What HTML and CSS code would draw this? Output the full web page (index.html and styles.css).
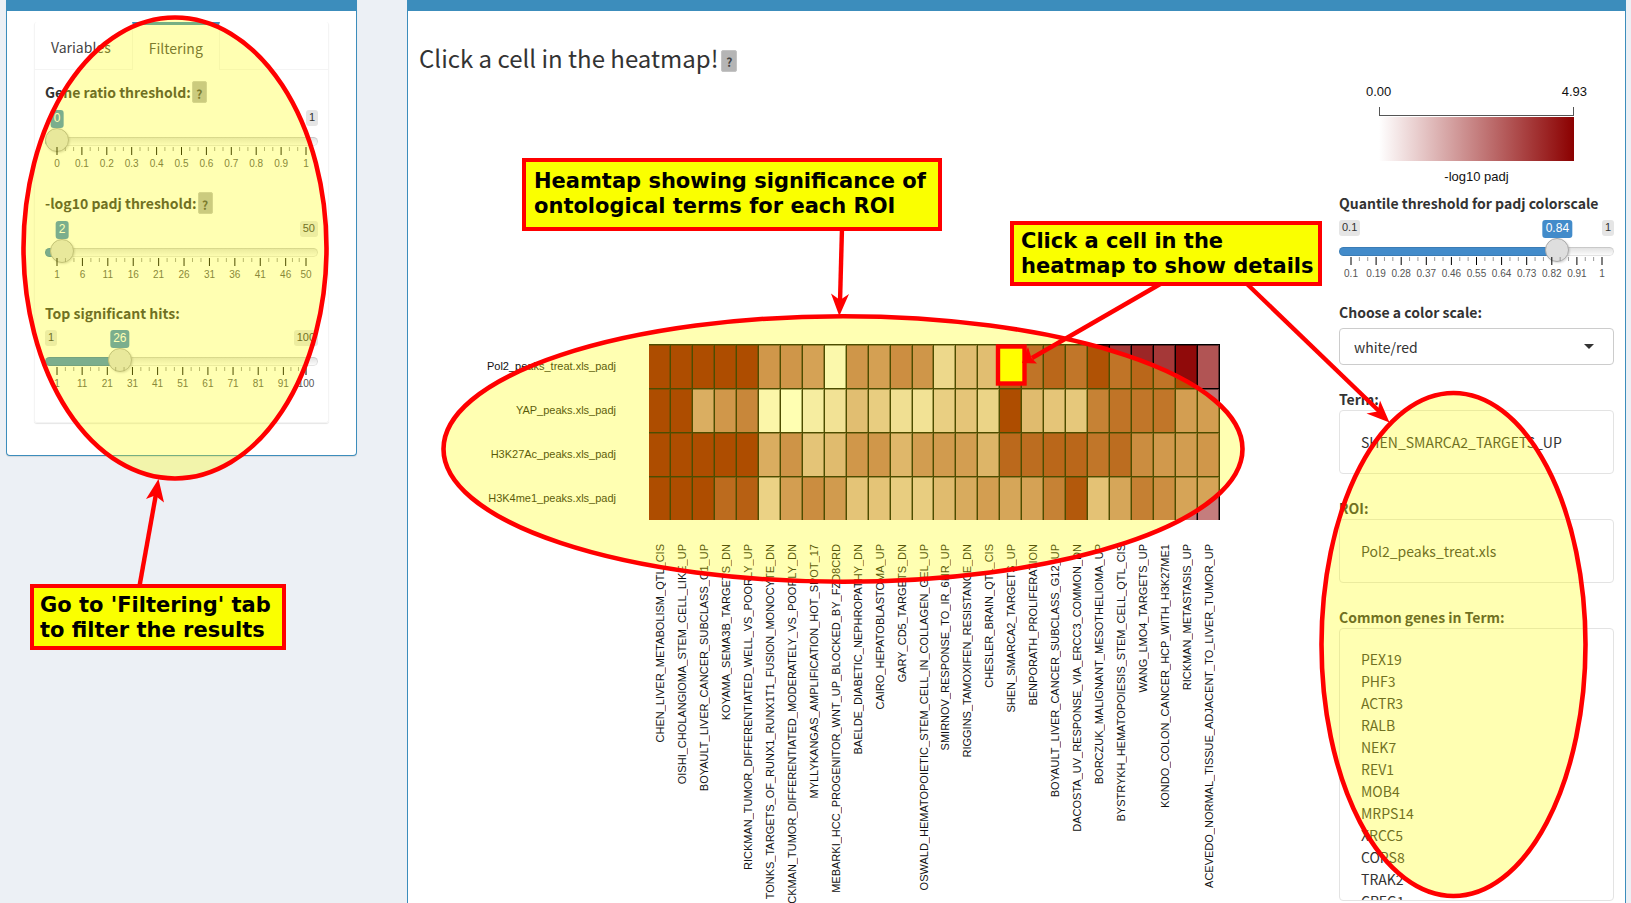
FILE: index.html
```html
<!DOCTYPE html>
<html lang="en">
<head>
<meta charset="utf-8">
<title>Ontology enrichment heatmap</title>
<link rel="stylesheet" href="styles.css">
</head>
<body>
<main class="page">
  <section class="box filter-box">
    <div class="tab-panel">
      <div class="tabs" role="tablist">
        <button class="tab" type="button" role="tab" aria-selected="false">Variables</button>
        <button class="tab active" type="button" role="tab" aria-selected="true">Filtering</button>
      </div>
      <div class="tab-body">
        <div class="field">
          <div class="label-row"><label for="ratio">Gene ratio threshold:</label><button class="help" type="button">?</button></div>
          <div class="slider" data-min="0" data-max="1" data-value="0" data-step="0.01" data-id="ratio" data-ticks="0,0.1,0.2,0.3,0.4,0.5,0.6,0.7,0.8,0.9,1"></div>
        </div>
        <div class="field">
          <div class="label-row"><label for="padj">-log10 padj threshold:</label><button class="help" type="button">?</button></div>
          <div class="slider" data-min="1" data-max="50" data-value="2" data-step="1" data-id="padj" data-ticks="1,6,11,16,21,26,31,36,41,46,50"></div>
        </div>
        <div class="field">
          <div class="label-row"><label for="hits">Top significant hits:</label></div>
          <div class="slider" data-min="1" data-max="100" data-value="26" data-step="1" data-id="hits" data-ticks="1,11,21,31,41,51,61,71,81,91,100"></div>
        </div>
      </div>
    </div>
  </section>

  <section class="box result-box">
    <div class="plot">
      <h1 class="title">Click a cell in the heatmap!<button class="help" type="button">?</button></h1>
      <div class="heatmap">
        <div class="row-labels" id="rows"></div>
        <div class="cells" id="cells"></div>
        <div class="col-labels" id="cols"></div>
      </div>
    </div>

    <aside class="side">
      <div class="legend">
        <div class="legend-ends"><span>0.00</span><span>4.93</span></div>
        <div class="legend-bracket"></div>
        <div class="legend-ramp"></div>
        <div class="legend-name">-log10 padj</div>
      </div>
      <div class="field">
        <div class="label-row"><label for="quantile">Quantile threshold for padj colorscale</label></div>
        <div class="slider" data-min="0.1" data-max="1" data-value="0.84" data-step="0.01" data-id="quantile" data-ticks="0.1,0.19,0.28,0.37,0.46,0.55,0.64,0.73,0.82,0.91,1"></div>
      </div>
      <div class="group">
        <label class="group-label" for="scale">Choose a color scale:</label>
        <div class="select-wrap"><select id="scale"><option>white/red</option></select></div>
      </div>
      <div class="group">
        <strong class="group-label">Term:</strong>
        <div class="well">SHEN_SMARCA2_TARGETS_UP</div>
      </div>
      <div class="group">
        <strong class="group-label">ROI:</strong>
        <div class="well">Pol2_peaks_treat.xls</div>
      </div>
      <div class="group">
        <strong class="group-label">Common genes in Term:</strong>
        <div class="well genes">PEX19<br>PHF3<br>ACTR3<br>RALB<br>NEK7<br>REV1<br>MOB4<br>MRPS14<br>XRCC5<br>COPS8<br>TRAK2<br>CREG1</div>
      </div>
    </aside>
  </section>
</main>

<svg class="marks" width="1631" height="903" viewBox="0 0 1631 903" aria-hidden="true">
  <g fill="#ffff00" fill-opacity="0.3" stroke="#ff0000" stroke-width="4.6">
    <ellipse cx="175" cy="248" rx="151.5" ry="230.5"/>
    <ellipse cx="843" cy="449" rx="399.5" ry="132.8"/>
    <ellipse cx="1453.5" cy="644.5" rx="132" ry="251.5"/>
  </g>
  <rect x="998" y="346.5" width="26.5" height="37" fill="#ffff00" stroke="#ff0000" stroke-width="4.4"/>
  <g stroke="#ff0000" stroke-width="4.4">
    <path d="M139.500 586 156 494"/>
    <path d="M842 228 840 302"/>
    <path d="M1162 283 1032 358"/>
    <path d="M1246 283 1380 412"/>
  </g>
  <g fill="#ff0000">
    <path d="M158.500 479 164 502.500 155 495.500 146 499Z"/>
    <path d="M839.300 316 831 293.500 840 300 849 294Z"/>
    <path d="M1022 363 1028 347 1031.500 358 1037 363.500Z"/>
    <path d="M1389.500 422.500 1380 400.500 1377.500 411.500 1366.500 413.500Z"/>
  </g>
</svg>
<div class="callout callout-filter">Go to 'Filtering' tab<br>to filter the results</div>
<div class="callout callout-heatmap">Heamtap showing significance of<br>ontological terms for each ROI</div>
<div class="callout callout-cell">Click a cell in the<br>heatmap to show details</div>
<script src="app.js"></script>
</body>
</html>
```
FILE: styles.css
```css
* { box-sizing: border-box; }

body {
  margin: 0;
  background: #ecf0f5;
  color: #333;
  font: 14px/22px "Noto Sans CJK SC", "Open Sans", sans-serif;
}

button, select { font: inherit; color: inherit; }

.page {
  display: grid;
  grid-template-columns: 351fr 1219fr;
  gap: 50px;
  align-items: start;
  height: 100vh;
  padding: 0 5px 0 6px;
  overflow: hidden;
}

.box {
  background: #fff;
  border: 1px solid #3c8dbc;
  border-top-width: 11px;
}

.filter-box {
  border-radius: 0 0 4px 4px;
  box-shadow: 0 1px 1px rgba(0, 0, 0, 0.1);
  padding: 11px 27px 32px;
}

/* Tabs */
.tab-panel {
  border: 1px solid #f4f4f4;
  border-top: 0;
  border-radius: 3px;
  box-shadow: 0 1px 1px rgba(0, 0, 0, 0.1);
}

.tabs {
  display: flex;
  gap: 5px;
  height: 48px;
  border-bottom: 1px solid #f4f4f4;
}

.tab {
  border: 0;
  border-top: 3px solid transparent;
  background: none;
  padding: 0 16px;
  color: #444;
}

.tab.active {
  margin-bottom: -1px;
  border-top-color: #3c8dbc;
  border-left: 1px solid #f4f4f4;
  border-right: 1px solid #f4f4f4;
  background: #fff;
}

.tab-body { padding: 10px 10px 11px; }

/* Sliders */
.field { padding-bottom: 14px; }

.label-row {
  display: flex;
  align-items: center;
  gap: 1px;
  font-weight: bold;
}

.help {
  width: 15px;
  height: 22px;
  margin: 1px 0;
  padding: 3px 0 0;
  border: 1px solid #c4c4c4;
  border-radius: 2px;
  background: #b5b5b5;
  color: #444;
  font-size: 12px;
  font-weight: bold;
  line-height: 16px;
}

.slider {
  padding-top: 6px;
  font-family: "Liberation Sans", Arial, sans-serif;
}

.values {
  display: grid;
  grid-template-columns: 1fr;
  align-items: start;
  height: 19px;
}

.values > * { grid-area: 1 / 1; }

.bound, .value {
  width: fit-content;
  border-radius: 3px;
  padding: 0 3px;
}

.bound {
  height: 16px;
  background: #e5e5e5;
  font-size: 11px;
  line-height: 15px;
}

.bound.max { justify-self: end; }

.value {
  height: 18px;
  margin-left: calc(12px + (100% - 24px) * var(--part));
  transform: translateX(-50%);
  background: #428bca;
  color: #fff;
  font-size: 12px;
  line-height: 16px;
}

.range {
  display: block;
  width: 100%;
  height: 24px;
  margin: 0;
  appearance: none;
  background: none;
}

.range::-webkit-slider-runnable-track {
  height: 9px;
  border-radius: 5px;
  box-shadow: inset 0 0 0 1px rgba(0, 0, 0, 0.1);
  background: linear-gradient(to right, #428bca calc(12px + (100% - 24px) * var(--part)), transparent 0), linear-gradient(#dedede, #fff);
}

.range::-webkit-slider-thumb {
  appearance: none;
  width: 24px;
  height: 24px;
  margin-top: -9px;
  border: 1px solid #aaa;
  border-radius: 50%;
  background: #dedede;
  box-shadow: 1px 1px 2px rgba(0, 0, 0, 0.15);
}

.ticks {
  margin: -6px 12px 0;
  height: 30px;
}

.ticks svg {
  display: block;
  width: 100%;
  height: 30px;
  overflow: visible;
}

.ticks text {
  font-size: 10px;
  text-anchor: middle;
  fill: #555;
}

/* Result area */
.result-box {
  display: grid;
  grid-template-columns: 1fr 275px;
  gap: 119px;
  min-height: 100vh;
  padding: 0 11px;
}

.title {
  display: flex;
  align-items: center;
  gap: 3px;
  height: 94px;
  margin: 0;
  font-size: 24px;
  font-weight: normal;
  line-height: 30px;
}

.title .help { width: 16px; margin-top: 6px; }

.heatmap {
  display: grid;
  grid-template-columns: 197px 1fr;
  column-gap: 33px;
  padding-top: 239px;
  color: #111;
  font: 11px/16px "Liberation Sans", Arial, sans-serif;
}

.row-labels {
  display: grid;
  grid-auto-rows: 44px;
  align-items: center;
  text-align: right;
}

.cells {
  display: grid;
  grid-template-columns: repeat(26, 1fr);
  grid-auto-rows: 44px;
}

.cell {
  border: 0 solid #000;
  border-top-width: 1px;
  border-right-width: 1px;
  box-shadow: inset -1px 1px 0 rgba(0, 0, 0, 0.45);
  padding: 0;
}

.col-labels {
  grid-column: 2;
  display: grid;
  grid-template-columns: repeat(26, 1fr);
  justify-items: center;
  align-items: start;
  padding-top: 24px;
}

.col-labels span {
  writing-mode: vertical-rl;
  transform: rotate(180deg);
  white-space: nowrap;
}

/* Sidebar */
.side { padding-top: 70px; }

.legend {
  margin: 0 40px 4px;
  color: #111;
  font: 13px/22px "Liberation Sans", Arial, sans-serif;
}

.legend-ends {
  display: flex;
  justify-content: space-between;
  margin: 0 -13px 4px;
}

.legend-bracket {
  height: 9px;
  border: 1px solid #555;
  border-top: 0;
}

.legend-ramp {
  height: 44px;
  margin-top: 1px;
  background: linear-gradient(to right, #fff, #8b0000);
}

.legend-name {
  margin-top: 5px;
  text-align: center;
}

.group { margin-bottom: 23px; }
.group:last-child { margin-bottom: 0; }

.group-label {
  display: block;
  font-weight: bold;
}

.select-wrap {
  position: relative;
  margin-top: 5px;
}

.select-wrap::after {
  content: "";
  position: absolute;
  top: 16px;
  right: 20px;
  border: 5px solid transparent;
  border-top-color: #333;
  border-bottom: 0;
}

.select-wrap select {
  display: block;
  width: 100%;
  height: 37px;
  appearance: none;
  border: 1px solid #ccc;
  border-radius: 4px;
  background: #fff;
  padding: 0 14px;
}

.well {
  border: 1px solid #e3e3e3;
  border-radius: 4px;
  padding: 20px 21px;
}

.genes {
  height: 273px;
  padding-top: 19px;
  overflow: hidden;
}

/* Annotations laid over the page */
.marks {
  position: absolute;
  top: 0;
  left: 0;
  fill: none;
}

.callout {
  position: absolute;
  border: 4px solid #f00;
  background: #faff00;
  color: #000;
  font: bold 21px/25px "DejaVu Sans", sans-serif;
  white-space: nowrap;
}

.callout-filter { top: 584px; left: 30px; width: 256px; padding: 5px 6px 3px; }
.callout-heatmap { top: 158px; left: 522px; width: 420px; padding: 7px 8px 8px; }
.callout-cell { top: 221px; left: 1010px; width: 312px; padding: 4px 7px 3px; }
```
FILE: app.js
```js
const rows = ["Pol2_peaks_treat.xls_padj", "YAP_peaks.xls_padj", "H3K27Ac_peaks.xls_padj", "H3K4me1_peaks.xls_padj"];

const terms = [
  "CHEN_LIVER_METABOLISM_QTL_CIS", "OISHI_CHOLANGIOMA_STEM_CELL_LIKE_UP", "BOYAULT_LIVER_CANCER_SUBCLASS_G1_UP",
  "KOYAMA_SEMA3B_TARGETS_DN", "RICKMAN_TUMOR_DIFFERENTIATED_WELL_VS_POORLY_UP", "TONKS_TARGETS_OF_RUNX1_RUNX1T1_FUSION_MONOCYTE_DN",
  "RICKMAN_TUMOR_DIFFERENTIATED_MODERATELY_VS_POORLY_DN", "MYLLYKANGAS_AMPLIFICATION_HOT_SPOT_17",
  "MEBARKI_HCC_PROGENITOR_WNT_UP_BLOCKED_BY_FZD8CRD", "BAELDE_DIABETIC_NEPHROPATHY_DN", "CAIRO_HEPATOBLASTOMA_UP",
  "GARY_CD5_TARGETS_DN", "OSWALD_HEMATOPOIETIC_STEM_CELL_IN_COLLAGEN_GEL_UP", "SMIRNOV_RESPONSE_TO_IR_6HR_UP",
  "RIGGINS_TAMOXIFEN_RESISTANCE_DN", "CHESLER_BRAIN_QTL_CIS", "SHEN_SMARCA2_TARGETS_UP", "BENPORATH_PROLIFERATION",
  "BOYAULT_LIVER_CANCER_SUBCLASS_G12_UP", "DACOSTA_UV_RESPONSE_VIA_ERCC3_COMMON_DN", "BORCZUK_MALIGNANT_MESOTHELIOMA_UP",
  "BYSTRYKH_HEMATOPOIESIS_STEM_CELL_QTL_CIS", "WANG_LMO4_TARGETS_UP", "KONDO_COLON_CANCER_HCP_WITH_H3K27ME1",
  "RICKMAN_METASTASIS_UP", "ACEVEDO_NORMAL_TISSUE_ADJACENT_TO_LIVER_TUMOR_UP"
];

// Share of the colour scale's maximum, in percent.
const scores = [
  [100, 100, 100, 100, 100, 58, 59, 52, 4, 59, 53, 63, 59, 22, 37, 36, 90, 78, 85, 77, 97, 78, 85, 78, 96, 67],
  [100, 100, 45, 58, 67, 5, 0, 10, 16, 36, 28, 18, 16, 27, 32, 24, 100, 38, 32, 31, 70, 78, 77, 77, 54, 54],
  [100, 100, 100, 100, 100, 46, 60, 33, 38, 58, 58, 40, 55, 56, 54, 41, 84, 82, 85, 85, 77, 82, 64, 57, 55, 58],
  [100, 100, 100, 83, 89, 25, 54, 64, 56, 33, 33, 28, 28, 38, 47, 54, 50, 52, 70, 93, 34, 50, 71, 63, 51, 51]
];

const label = text => `<span>${text}</span>`;
document.getElementById("rows").innerHTML = rows.map(label).join("");
document.getElementById("cols").innerHTML = terms.map(label).join("");
document.getElementById("cells").innerHTML = scores.flat().map((score, i) => {
  const name = `${rows[Math.floor(i / 26)]}, ${terms[i % 26]}`;
  return `<button type="button" class="cell" aria-label="${name}" style="background:color-mix(in srgb, #8b0000 ${score}%, #fff)"></button>`;
}).join("");

for (const el of document.querySelectorAll(".slider")) {
  const { min, max, value, step, id, ticks } = el.dataset;
  const part = v => (v - min) / (max - min);
  const marks = ticks.split(",").map(Number);
  let lines = "";
  marks.forEach((mark, i) => {
    const x = part(mark) * 100;
    lines += `<line x1="${x}%" x2="${x}%" y2="8" stroke="#000"/><text x="${x}%" y="20">${mark}</text>`;
    if (i < marks.length - 1) {
      const next = part(marks[i + 1]) * 100;
      for (const k of [1, 2]) {
        const m = x + (next - x) * k / 3;
        lines += `<line x1="${m}%" x2="${m}%" y2="4" stroke="#999"/>`;
      }
    }
  });
  el.style.setProperty("--part", part(value));
  const low = part(value) > 0.1 ? `<span class="bound">${min}</span>` : "";
  el.innerHTML = `<div class="values">${low}<span class="bound max">${max}</span><output class="value" for="${id}">${value}</output></div>
    <input class="range" type="range" id="${id}" min="${min}" max="${max}" step="${step}" value="${value}">
    <div class="ticks"><svg>${lines}</svg></div>`;
}
```
